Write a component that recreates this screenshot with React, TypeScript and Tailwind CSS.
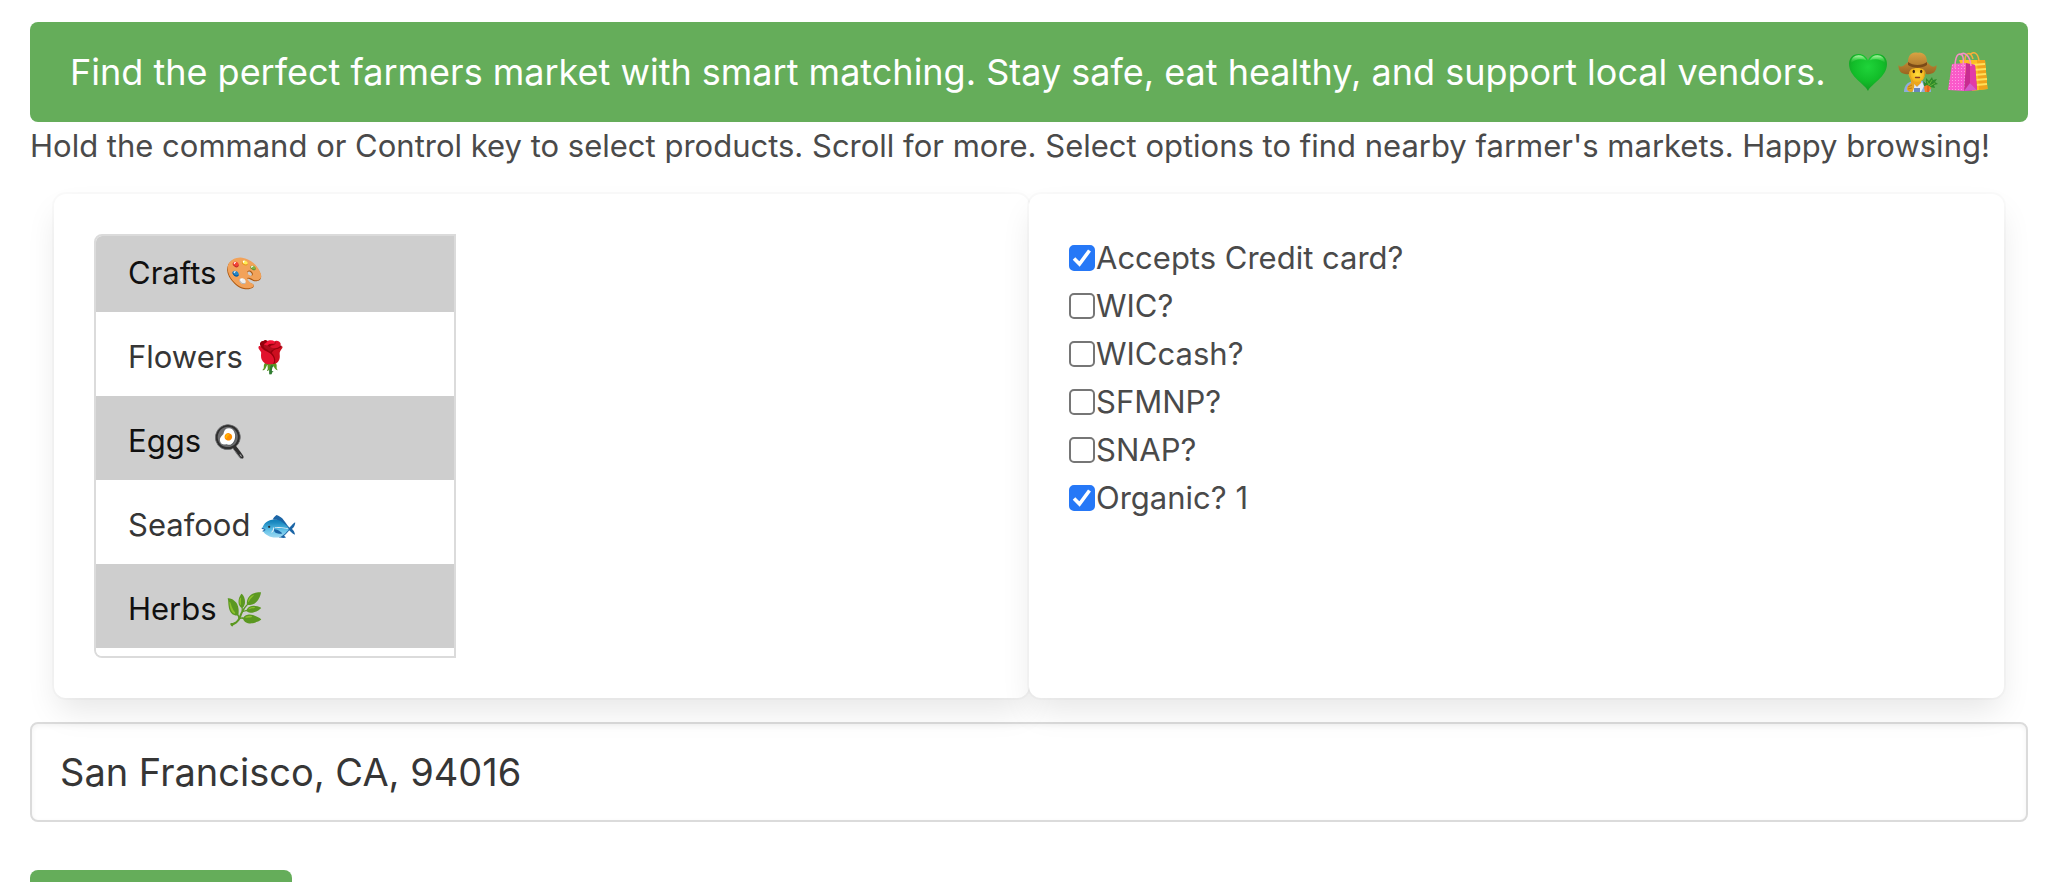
import { useEffect, useRef, useState } from 'react';

const products = ['Crafts 🎨', 'Flowers 🌹', 'Eggs 🍳', 'Seafood 🐟', 'Herbs 🌿', ''];

const filters = [
  { label: 'Accepts Credit card?', checked: true },
  { label: 'WIC?', checked: false },
  { label: 'WICcash?', checked: false },
  { label: 'SFMNP?', checked: false },
  { label: 'SNAP?', checked: false },
  { label: 'Organic? 1', checked: true },
];

function Heart() {
  return (
    <svg viewBox="0 0 40 40" className="size-10" role="img" aria-label="green heart">
      <defs>
        <radialGradient id="heart" cx="0.5" cy="0.35" r="0.65">
          <stop offset="0" stopColor="#1fd43a" />
          <stop offset="0.6" stopColor="#12bd29" />
          <stop offset="1" stopColor="#149a22" />
        </radialGradient>
        <linearGradient id="shine" x1="0" y1="0" x2="0" y2="1">
          <stop offset="0" stopColor="#c8fbb8" stopOpacity="0.9" />
          <stop offset="1" stopColor="#5fe85f" stopOpacity="0" />
        </linearGradient>
      </defs>
      <path d="M20 39C17 32 1 25 1 12C1 6 5 2 10.500 2C15 2 18.500 4.500 20 8.500C21.500 4.500 25 2 29.500 2C35 2 39 6 39 12C39 25 23 32 20 39Z" fill="url(#heart)" />
      <path d="M3 11C3 6 6.500 3.200 10.500 3.200C14 3.200 17 5 18.500 8.500C13 6 7 7 3 11Z" fill="url(#shine)" />
      <path d="M37 11C37 6 33.500 3.200 29.500 3.200C26 3.200 23 5 21.500 8.500C27 6 33 7 37 11Z" fill="url(#shine)" />
    </svg>
  );
}

function Farmer() {
  return (
    <svg viewBox="0 0 40 40" className="size-10" role="img" aria-label="farmer">
      <defs>
        <linearGradient id="hat" x1="0" y1="0" x2="0" y2="1">
          <stop offset="0" stopColor="#d9a343" />
          <stop offset="1" stopColor="#9a6420" />
        </linearGradient>
        <radialGradient id="face" cx="0.5" cy="0.5" r="0.6">
          <stop offset="0" stopColor="#ffdf3d" />
          <stop offset="1" stopColor="#f0a914" />
        </radialGradient>
      </defs>
      <path d="M6 40C6 33 10 30 15 29H24C29 30 33 33 33 40Z" fill="#8eabdc" />
      <path d="M15 28H23V31L19 35L15 31Z" fill="#eda51b" />
      <path d="M14 30L19 35L24 30L26 34L23 40H15L13 34Z" fill="#e3e9f4" />
      <path d="M16 36H22V40H16Z" fill="#6787bd" />
      <path d="M12 15H27V22C27 27 23 30 19.500 30C15 30 12 27 12 22Z" fill="url(#face)" />
      <path d="M10 17C9 24 14 27 13 31L10 34C7 38 11 40 14 40C17 36 17 31 14 27C12 24 12 20 13 16Z" fill="#e5a523" />
      <path d="M10 35L14 33M10 37L14 36" stroke="#b87412" strokeWidth="0.8" />
      <path d="M27 15C29 20 27 24 25 27C27 22 26 19 25 16Z" fill="#d99a1c" />
      <ellipse cx="15.800" cy="19.500" rx="1.200" ry="1.700" fill="#402312" />
      <ellipse cx="23.200" cy="19.500" rx="1.200" ry="1.700" fill="#402312" />
      <path d="M17.500 25.500H21.500" stroke="#8a3b1d" strokeWidth="1.400" strokeLinecap="round" />
      <path d="M0.500 13C4 17 7 12 10 10C10 4 13 0.500 17 0.500C19 0.500 20 1 21 0.500C26 0.500 29 4 29 10C32 13 35 17 38.500 13C39 20 34 23 28 22C28 18 24 16 19.500 16C14 16 11 18 11 22C5 23 0 20 0.500 13Z" fill="url(#hat)" />
      <path d="M10 10C15 14 24 14 29 10V13C24 16.500 15 16.500 10 13Z" fill="#7b4b18" />
      <path d="M26 34L25 29L28 31L28 26L31 29L34 25L35 28L39 27L37 30L40 32L36 33L37 36L32 35L29 36Z" fill="#2f8a2a" />
      <path d="M29 29L31 33L34 28M32 34L37 31" stroke="#73bd3b" strokeWidth="0.8" fill="none" />
      <path d="M26 35C28 32 32 33 33 36L31 40H27Z" fill="#f47b25" />
      <path d="M30 34V40" stroke="#c84c13" strokeWidth="0.9" />
    </svg>
  );
}

function ShoppingBags() {
  return (
    <svg viewBox="0 0 40 40" className="size-10" role="img" aria-label="shopping bags">
      <defs>
        <linearGradient id="pink" x1="0" y1="0" x2="1" y2="1">
          <stop offset="0" stopColor="#f85fc0" />
          <stop offset="1" stopColor="#fb55d2" />
        </linearGradient>
        <pattern id="dots" width="3" height="3" patternUnits="userSpaceOnUse">
          <circle cx="1.500" cy="1.500" r="0.500" fill="#ffb1ea" />
        </pattern>
      </defs>
      <path d="M11 8L37 8L39.500 37L24 39Z" fill="#fdbd24" />
      <path d="M29 8L37 8L39.500 37L31 38Z" fill="#f2a41b" />
      <path d="M23 13L37 12M25 18L38 17M26 23L38 22M27 28L39 27M28 33L39 32" stroke="#ffe15b" strokeWidth="1.800" />
      <path d="M17 9C17 -1 23 0 25 7M22 3C25 -1 30 0 31 9" stroke="#f7ae3a" strokeWidth="1.500" fill="none" />
      <path d="M18 11L27 13L29 38L16 39Z" fill="#c92b91" />
      <path d="M22 12L27 13L29 38L22 31Z" fill="#e23aa8" />
      <path d="M16 39L22 31L29 38Z" fill="#d65acb" />
      <path d="M4 12L18 11L16 39L0 38Z" fill="url(#pink)" />
      <path d="M4 12L18 11L16 39L0 38Z" fill="url(#dots)" />
      <path d="M7 16C7 6 9 2 12 2C15 2 16 6 15 15M12 3C16 -1 22 3 23 14" stroke="#f58fc6" strokeWidth="1.500" fill="none" />
    </svg>
  );
}

export default function App() {
  const [selected, setSelected] = useState<string[]>([products[0], products[2], products[4]]);
  const [location, setLocation] = useState('San Francisco, CA, 94016');
  const listRef = useRef<HTMLSelectElement>(null);

  useEffect(() => {
    if (listRef.current) listRef.current.scrollTop = 8;
  }, []);

  return (
    <div className="h-screen overflow-hidden bg-white pl-[30px] pr-[42px] pt-[22px] font-[Inter,'Noto_Sans',sans-serif] text-[#4a4a4a]">
      {/* Banner */}
      <button className="flex h-[100px] w-full items-center justify-between rounded-lg bg-[#65ad5a] px-10 text-[36px] text-white whitespace-nowrap">
        <span>Find the perfect farmers market with smart matching. Stay safe, eat healthy, and support local vendors.</span>
        <span className="flex gap-[10px]">
          <Heart />
          <Farmer />
          <ShoppingBags />
        </span>
      </button>
      <p className="text-[31px] leading-[48px] whitespace-nowrap">
        Hold the command or Control key to select products. Scroll for more. Select options to find nearby farmer's markets. Happy browsing!
      </p>

      <div className="mx-6 mt-6 flex">
        {/* Products */}
        <div className="flex-1 rounded-xl bg-white p-10 shadow-[0_16px_32px_-4px_rgba(10,10,10,0.1),0_0_0_2px_rgba(10,10,10,0.02)]">
          <select
            ref={listRef}
            multiple
            aria-label="Products"
            value={selected}
            onChange={(e) => setSelected(Array.from(e.target.selectedOptions, (o) => o.value))}
            className="block h-[424px] w-[362px] rounded-l-lg border-2 border-[#dbdbdb] bg-white text-[31px] text-[#363636] [scrollbar-width:none]"
          >
            {products.map((p) => (
              <option key={p} value={p} className="h-[84px] px-8 py-[26px]">{p}</option>
            ))}
          </select>
        </div>

        {/* Payment and label filters */}
        <div className="flex-1 rounded-xl bg-white p-10 shadow-[0_16px_32px_-4px_rgba(10,10,10,0.1),0_0_0_2px_rgba(10,10,10,0.02)]">
          {filters.map((f) => (
            <label key={f.label} className="flex items-center gap-px text-[31px] leading-[48px]">
              <span className="grid size-[26px]">
                <input
                  type="checkbox"
                  defaultChecked={f.checked}
                  className="peer col-start-1 row-start-1 size-[26px] appearance-none rounded-[5px] border-2 border-[#767676] bg-white checked:border-[#2678f7] checked:bg-[#2678f7]"
                />
                <svg viewBox="0 0 26 26" className="pointer-events-none invisible col-start-1 row-start-1 size-[26px] peer-checked:visible">
                  <path d="M5 13.500L10.500 19L20.500 5.500" stroke="white" strokeWidth="3.600" fill="none" />
                </svg>
              </span>
              {f.label}
            </label>
          ))}
        </div>
      </div>

      <input
        type="text"
        aria-label="Location"
        value={location}
        onChange={(e) => setLocation(e.target.value)}
        className="mt-6 block h-[100px] w-full rounded-lg border-2 border-[#dbdbdb] bg-white px-7 text-[38px] text-[#363636] shadow-[inset_0_2px_5px_rgba(10,10,10,0.05)]"
      />
      <button aria-label="Search" className="mt-12 block h-[100px] w-[262px] rounded-lg bg-[#65ad5a]" />
    </div>
  );
}
